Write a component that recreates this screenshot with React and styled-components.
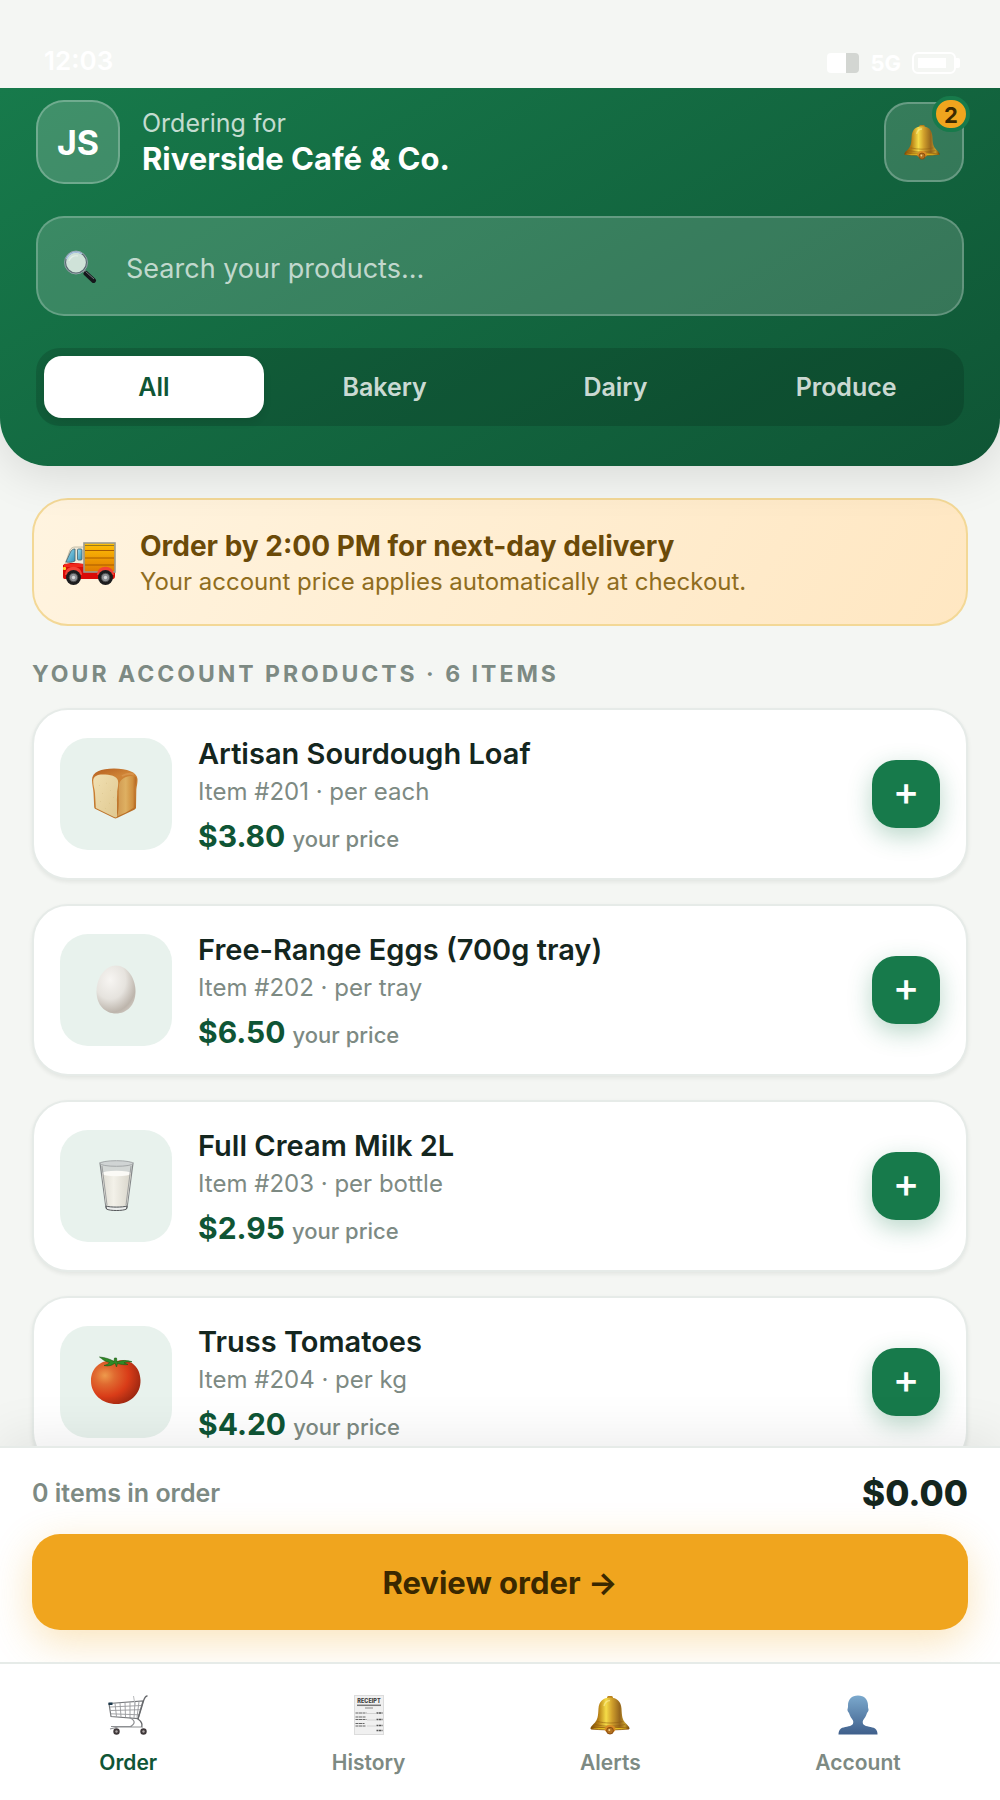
import React, { useState } from 'react'
import styled, { createGlobalStyle } from 'styled-components';

const GlobalStyle = createGlobalStyle`
  * {
    box-sizing: border-box;
  }
  body {
    margin: 0;
    background: #f4f6f3;
    color: #14261e;
    font-family: Inter, "Liberation Sans", sans-serif;
  }
  button, input {
    font-family: inherit;
  }
  h1, h2, h3, p {
    margin: 0;
  }
`;

const products = [
  { id: 201, name: 'Artisan Sourdough Loaf', unit: 'each', price: 3.8, Icon: BreadIcon },
  { id: 202, name: 'Free-Range Eggs (700g tray)', unit: 'tray', price: 6.5, Icon: EggIcon },
  { id: 203, name: 'Full Cream Milk 2L', unit: 'bottle', price: 2.95, Icon: MilkIcon },
  { id: 204, name: 'Truss Tomatoes', unit: 'kg', price: 4.2, Icon: TomatoIcon },
];

const categories = ['All', 'Bakery', 'Dairy', 'Produce'];

const navItems = [
  { label: 'Order', Icon: CartIcon },
  { label: 'History', Icon: ReceiptIcon },
  { label: 'Alerts', Icon: BellIcon },
  { label: 'Account', Icon: PersonIcon },
];

function BellIcon({ size = 40 }) {
  return (
    <svg width={size} height={size} viewBox="0 0 40 40" aria-hidden="true">
      <defs>
        <linearGradient id="bellBody" x1="0" x2="1" y1="0" y2="0">
          <stop offset="0" stopColor="#7a4c06" />
          <stop offset="0.2" stopColor="#b57d14" />
          <stop offset="0.4" stopColor="#f5dc48" />
          <stop offset="0.55" stopColor="#d1a02c" />
          <stop offset="0.75" stopColor="#95661d" />
          <stop offset="0.88" stopColor="#c39a2a" />
          <stop offset="1" stopColor="#6d430b" />
        </linearGradient>
      </defs>
      <rect x="17" y="1" width="6" height="4" rx="1.5" fill="#b98019" />
      <path d="M20 2.500c-7 0-11 4-11.500 11-.4 8-1 11-3.500 14-2 2.300-4 3.600-4.500 5.500-.2 1 .8 1.500 2 1.500h35c1.200 0 2.200-.5 2-1.500-.5-1.900-2.500-3.200-4.500-5.500-2.500-3-3.100-6-3.500-14C31 6.500 27 2.500 20 2.500z" fill="url(#bellBody)" />
      <path d="M7.500 26.500c8 2 17 2 25 0M5 29.500c9 2.200 21 2.200 30 0" fill="none" stroke="#8d5c11" strokeWidth="0.800" opacity="0.7" />
      <path d="M1 33.500c7-1.600 31-1.600 38 0-6 1.900-32 1.900-38 0z" fill="#e3bc20" stroke="#8a500b" strokeWidth="0.700" />
      <path d="M14.500 34.500a5.500 4.500 0 0 1 11 0c-1 4.500-10 4.500-11 0z" fill="#d98c25" />
      <circle cx="20" cy="35.700" r="3.400" fill="#b4701d" stroke="#7d430b" strokeWidth="0.800" />
      <circle cx="19.300" cy="35" r="1" fill="#f3d489" />
      <path d="M14 11c1-4 3-5.500 6-5.500" stroke="#fff09b" strokeWidth="1.500" fill="none" opacity="0.6" />
    </svg>
  );
}

function SearchIcon() {
  return (
    <svg width="34" height="34" viewBox="0 0 34 34" aria-hidden="true">
      <path d="M19 21l3 3" stroke="#9aa0a4" strokeWidth="3" />
      <path d="M22 24.500l7.500 7" stroke="#15171b" strokeWidth="5" strokeLinecap="round" />
      <path d="M21.500 22.500l8.500 7.500" stroke="#70757c" strokeWidth="1" />
      <circle cx="12" cy="13.500" r="10.800" fill="#cfe2d8" stroke="#596a70" strokeWidth="1.800" />
      <circle cx="12" cy="13.500" r="11.500" fill="none" stroke="#b9c6cc" strokeWidth="0.600" />
      <path d="M2.500 10a10 10 0 0 1 15.500-5" stroke="#a9c4e0" strokeWidth="1.500" fill="none" />
      <path d="M5 12c1-4 5-6 9-5" stroke="#e3efe9" strokeWidth="1.200" fill="none" />
    </svg>
  );
}

function TruckIcon() {
  return (
    <svg width="54" height="44" viewBox="0 0 54 44" aria-hidden="true">
      <defs>
        <linearGradient id="truckBox" x1="0" x2="0" y1="0" y2="1">
          <stop offset="0" stopColor="#ffc107" />
          <stop offset="1" stopColor="#e07b00" />
        </linearGradient>
        <linearGradient id="truckGlass" x1="0" x2="1" y1="0" y2="1">
          <stop offset="0" stopColor="#9adcf0" />
          <stop offset="1" stopColor="#3691b5" />
        </linearGradient>
      </defs>
      <path d="M3 22L8 8c1-2 3-3 5-3h9v19H3z" fill="#f0ead8" stroke="#b9b29c" strokeWidth="0.800" />
      <path d="M4 20l4.500-10c1-2 2.500-3 4.500-3v12c-3 1.500-6 1.500-9 1z" fill="url(#truckGlass)" stroke="#43606c" strokeWidth="0.800" />
      <rect x="15.500" y="7" width="4.500" height="11" rx="1" fill="url(#truckGlass)" stroke="#43606c" strokeWidth="0.800" />
      <path d="M1 23c6-3 14-2 21-1v4h31v8c0 2-1 3-2 3H3c-2 0-2-1-2-3z" fill="#d90b07" />
      <path d="M2 22h20v3H2z" fill="#f0281a" />
      <rect x="22" y="1" width="31" height="29" fill="url(#truckBox)" stroke="#999a91" strokeWidth="1.600" />
      <path d="M23 8.500h29M23 16h29M23 23h29" stroke="#a85a00" strokeWidth="1.200" />
      <path d="M23 3.500h29" stroke="#7f6a21" strokeWidth="0.800" />
      <path d="M3 33c0-11 17-11 17 0zM35 33c0-11 17-11 17 0z" fill="#f34235" />
      <rect x="1" y="25" width="3" height="3" rx="1" fill="#ffd633" />
      <circle cx="11.500" cy="35.500" r="7.500" fill="#1c1c1e" />
      <circle cx="43.500" cy="35.500" r="7.500" fill="#1c1c1e" />
      <circle cx="11.500" cy="35.500" r="4.200" fill="#8d8f93" stroke="#4a4b4d" />
      <circle cx="43.500" cy="35.500" r="4.200" fill="#8d8f93" stroke="#4a4b4d" />
      <circle cx="11.500" cy="35.500" r="1.700" fill="#d6d7d9" />
      <circle cx="43.500" cy="35.500" r="1.700" fill="#d6d7d9" />
    </svg>
  );
}

function BreadIcon() {
  return (
    <svg width="50" height="54" viewBox="0 0 50 54" aria-hidden="true">
      <defs>
        <linearGradient id="crust" x1="0" x2="0.300" y1="0" y2="1">
          <stop offset="0" stopColor="#b35c1e" />
          <stop offset="0.300" stopColor="#cf8436" />
          <stop offset="1" stopColor="#b97028" />
        </linearGradient>
        <linearGradient id="side" x1="0" x2="1" y1="0" y2="0">
          <stop offset="0" stopColor="#cf9850" />
          <stop offset="0.450" stopColor="#deb062" />
          <stop offset="0.800" stopColor="#d0903f" />
          <stop offset="1" stopColor="#b46522" />
        </linearGradient>
        <linearGradient id="crumb" x1="0" x2="1" y1="0" y2="1">
          <stop offset="0" stopColor="#f1e0b2" />
          <stop offset="1" stopColor="#dfc890" />
        </linearGradient>
      </defs>
      <path d="M1 13C1 5 10 1.500 23 1.500S46 5 46.500 12c.2 5-1 7-1.200 12L45 40.500c0 1-.7 1.800-1.700 2.300L26 51c-1.200.5-2 .5-3 0L4.500 42c-.8-.4-1.200-1-1.300-2L2.500 26C2.200 21 1 18 1 13z" fill="url(#crust)" />
      <path d="M28 18c1-7 10-11 17-8 1.300 4-1 8-1.200 14L43 40.500c-5 3.500-11 6.500-17 9 3-9 1-22 2-31.500z" fill="url(#side)" />
      <path d="M2.200 14c0-6 6-7 12-6.500 8 .6 13 2.500 13 8 0 5-1 7-1 10s-.5 7-.2 10V50c-1 .5-2 .5-3 0L4.800 41 4 26c-.2-4-1.800-7-1.800-12z" fill="url(#crumb)" />
      <path d="M31 9c4-2.500 8-3 12-1.500" stroke="#e7a966" strokeWidth="2" fill="none" opacity="0.4" />
      <path d="M8 18l.5.5M15 16l.5.300M11 26l.5.500M19 23l.5.500M9 34l.5.500M18 36l.5.300M14 41l.5.500M22 30l.500.500" stroke="#d6bf86" strokeWidth="1" />
    </svg>
  );
}

function EggIcon() {
  return (
    <svg width="50" height="54" viewBox="0 0 50 54" aria-hidden="true">
      <defs>
        <radialGradient id="shell" cx="0.350" cy="0.300" r="0.800">
          <stop offset="0" stopColor="#f7f5f2" />
          <stop offset="0.500" stopColor="#e6e3de" />
          <stop offset="0.850" stopColor="#bdb5ac" />
          <stop offset="1" stopColor="#cfc8c0" />
        </radialGradient>
      </defs>
      <path d="M25 2.500C14 2.500 5.500 15 5.500 28.500 5.500 42 14 50.500 25 50.500S44.500 42 44.500 28.500C44.500 15 36 2.500 25 2.500z" fill="url(#shell)" />
    </svg>
  );
}

function MilkIcon() {
  return (
    <svg width="50" height="54" viewBox="0 0 50 54" aria-hidden="true">
      <defs>
        <linearGradient id="milk" x1="0" x2="1" y1="0" y2="0">
          <stop offset="0" stopColor="#dedcd3" />
          <stop offset="0.400" stopColor="#f3f1e9" />
          <stop offset="1" stopColor="#d8d5ca" />
        </linearGradient>
      </defs>
      <path d="M9 4l6 45c.3 2.500 20.700 2.500 21 0l6-45z" fill="#d3d7d5" stroke="#85888a" strokeWidth="1.200" />
      <path d="M11 15c4-3 25-3 29 0l-4 31c-4 2-17 2-21 0z" fill="url(#milk)" />
      <ellipse cx="25.500" cy="14.500" rx="14.500" ry="2.700" fill="#fbfaf6" />
      <ellipse cx="25.500" cy="4.500" rx="16.500" ry="2.800" fill="#d0d4d4" stroke="#a4a8a9" strokeWidth="1" />
      <path d="M15 47c4 1.500 17 1.500 21 0l-.5 3c-3 2-17 2-20 0z" fill="#eceeed" stroke="#55585a" strokeWidth="1" />
      <path d="M11 7l5 39M40 7l-5 39" stroke="#8e9192" strokeWidth="0.800" />
    </svg>
  );
}

function TomatoIcon() {
  return (
    <svg width="50" height="54" viewBox="0 0 50 54" aria-hidden="true">
      <defs>
        <radialGradient id="tomato" cx="0.280" cy="0.350" r="0.800">
          <stop offset="0" stopColor="#ee9a4c" />
          <stop offset="0.250" stopColor="#e06a30" />
          <stop offset="0.600" stopColor="#d93c18" />
          <stop offset="1" stopColor="#942410" />
        </radialGradient>
      </defs>
      <path d="M25 6.500C33 2.500 49 7 49.500 25 50 39 39 49 25.500 49 11 49 0 39 0 26 0 10 15 3 25 6.500z" fill="url(#tomato)" />
      <path d="M24 8C21 10.500 18 11.500 13 10.500c3-.8 4.500-1.500 5.500-3C14 6.500 11 4 8.500 2 14 2.500 19 4 23 6.500L23.500 3h2l.5 4c5-2 10.500-2 15-.2-3.500-.3-6 .2-8 1l4 1.700c-4 .5-7 0-10.500-1L25.500 12z" fill="#2f8a26" stroke="#1b5a14" strokeWidth="0.600" />
    </svg>
  );
}

function CartIcon() {
  return (
    <svg width="40" height="40" viewBox="0 0 40 40" fill="none" aria-hidden="true">
      <path d="M1 8.500L35 6l-5 17.500L3 21.500z" stroke="#77797c" strokeWidth="1.200" />
      <path d="M2 12l31.500-1.500M2.300 15.500l30.500-.8M2.700 18.800l28.800 1M7 8.200l1.500 13.500M12 7.900l1 14M17 7.500l.5 14.800M22 7.200v15.500M27 6.800l-1 16M31 6.500l-2 16" stroke="#97999c" strokeWidth="0.900" />
      <path d="M39.500 1c-2.500-.2-3 2-4 5L30 24c4 3 5 5 3.500 8" stroke="#66686b" strokeWidth="1.300" />
      <path d="M21.500 22.500c6 3 6 6 1 9H3M2 34l8-2h25" stroke="#8d8f92" strokeWidth="1.200" />
      <path d="M25.500 1L27 10" stroke="#b8babc" strokeWidth="1" />
      <rect x="0.500" y="7.500" width="4" height="2.500" fill="#18364a" />
      <circle cx="8.500" cy="36.500" r="3.200" fill="#3e3739" />
      <circle cx="35.500" cy="36.500" r="3.200" fill="#3e3739" />
      <circle cx="8.500" cy="36.500" r="1.200" fill="#aaa3a3" />
      <circle cx="35.500" cy="36.500" r="1.200" fill="#aaa3a3" />
    </svg>
  );
}

function ReceiptIcon() {
  return (
    <svg width="40" height="40" viewBox="0 0 40 40" aria-hidden="true">
      <rect x="5.500" y="0.500" width="29" height="39" fill="#f0f0f0" stroke="#dcdcdc" />
      <text x="20" y="8.300" fontSize="5.500" fontWeight="800" textAnchor="middle" fill="#3b3b3b">RECEIPT</text>
      <path d="M8 10.300h24" stroke="#777" strokeWidth="1.500" />
      <path d="M16 13h8" stroke="#8a8a8a" strokeWidth="1" />
      <path d="M6.500 18h11M6.500 22h10M6.500 24.500h11M6.500 28.500h9M6.500 31h10" stroke="#666" strokeWidth="1.200" strokeDasharray="3 0.500" />
      <path d="M27.500 18h6M27.500 24.500h6M27.500 30.500h6M27.500 35.500h6" stroke="#555" strokeWidth="1.400" strokeDasharray="2 0.500" />
      <path d="M18 18.500h9M18 25h9M18 31h9" stroke="#d2d2d2" strokeWidth="1" />
    </svg>
  );
}

function PersonIcon() {
  return (
    <svg width="40" height="40" viewBox="0 0 40 40" aria-hidden="true">
      <defs>
        <linearGradient id="person" x1="0" x2="0" y1="0" y2="1">
          <stop offset="0" stopColor="#7ba9cd" />
          <stop offset="1" stopColor="#3f5f8b" />
        </linearGradient>
      </defs>
      <path d="M20 .5c-6.500 0-10 4-10 10 0 1.500 0 2-.3 3-.8 1.500.3 3.500 1.300 4.500 1 3.500 2.500 5 4 7.500.5 1.500.3 3-.5 4C12 32 6 31.500 3 33.500 1 35 .5 37 .5 39.500h39c0-2.500-.5-4.500-2.500-6-3-2-9-1.500-11.500-4-.8-1-1-2.500-.5-4 1.500-2.500 3-4 4-7.500 1-1 2.100-3 1.300-4.500-.3-1-.3-1.500-.3-3 0-6-3.500-10-10-10z" fill="url(#person)" />
    </svg>
  );
}

const App = () => {
  const [category, setCategory] = useState('All');
  const [tab, setTab] = useState('Order');
  const [order, setOrder] = useState([]);

  const total = order.reduce((sum, item) => sum + item.price, 0);

  return (
    <Screen>
      <GlobalStyle />
      <StatusBar>
        <span>12:03</span>
        <StatusIcons>
          <Signal />
          <Network>5G</Network>
          <Battery />
        </StatusIcons>
      </StatusBar>

      <Header>
        <AccountRow>
          <Avatar>JS</Avatar>
          <AccountText>
            <p>Ordering for</p>
            <h1>Riverside Café &amp; Co.</h1>
          </AccountText>
          <BellButton aria-label="Notifications">
            <BellIcon size={36} />
            <Badge>2</Badge>
          </BellButton>
        </AccountRow>
        <SearchBox>
          <SearchIcon />
          <input type="search" aria-label="Search your products" placeholder="Search your products..." />
        </SearchBox>
        <Tabs>
          {categories.map((name) => (
            <Tab key={name} $active={name === category} onClick={() => setCategory(name)}>
              {name}
            </Tab>
          ))}
        </Tabs>
      </Header>

      <Content>
        <Banner>
          <TruckIcon />
          <div>
            <BannerTitle>Order by 2:00 PM for next-day delivery</BannerTitle>
            <BannerText>Your account price applies automatically at checkout.</BannerText>
          </div>
        </Banner>
        <SectionTitle>Your account products · 6 items</SectionTitle>
        <ProductList>
          {products.map((product) => (
            <Card key={product.id}>
              <Thumb><product.Icon /></Thumb>
              <Info>
                <ProductName>{product.name}</ProductName>
                <Meta>Item #{product.id} · per {product.unit}</Meta>
                <Price>${product.price.toFixed(2)} <small>your price</small></Price>
              </Info>
              <AddButton
                aria-label={`Add ${product.name}`}
                onClick={() => setOrder([...order, product])}
              >
                +
              </AddButton>
            </Card>
          ))}
        </ProductList>
      </Content>

      <OrderBar>
        <Summary>
          <span>{order.length} items in order</span>
          <strong>${total.toFixed(2)}</strong>
        </Summary>
        <ReviewButton>Review order →</ReviewButton>
      </OrderBar>

      <BottomNav>
        {navItems.map(({ label, Icon }) => (
          <NavButton key={label} $active={label === tab} onClick={() => setTab(label)}>
            <Icon />
            {label}
          </NavButton>
        ))}
      </BottomNav>
    </Screen>
  )
}

const Screen = styled.div`
  display: flex;
  flex-direction: column;
  height: 100vh;
  overflow: hidden;
`;

const StatusBar = styled.div`
  position: relative;
  z-index: 2;
  display: flex;
  justify-content: space-between;
  align-items: center;
  flex: none;
  padding: 45px 40px 11px 44px;
  background: #f4f6f3;
  color: #fff;
  font-size: 26px;
  font-weight: 600;
  line-height: 32px;
`;

const StatusIcons = styled.div`
  display: flex;
  align-items: center;
  gap: 11px;
  height: 32px;
  padding-top: 4px;
`;

const Signal = styled.span`
  width: 32px;
  height: 20px;
  border-radius: 4px;
  background: linear-gradient(90deg, #fff 60%, #d3d6d2 60%);
`;

const Network = styled.span`
  font-size: 22px;
  font-weight: 700;
`;

const Battery = styled.span`
  position: relative;
  width: 44px;
  height: 22px;
  margin-right: 4px;
  padding: 4px 8px 4px 4px;
  border: 2px solid #fff;
  border-radius: 6px;
  background: #fff content-box;

  &::after {
    content: '';
    position: absolute;
    top: 4px;
    right: -6px;
    width: 4px;
    height: 10px;
    border-radius: 0 2px 2px 0;
    background: #fff;
  }
`;

const Header = styled.header`
  position: relative;
  z-index: 1;
  display: flex;
  flex-direction: column;
  gap: 32px;
  flex: none;
  padding: 12px 36px 40px;
  border-radius: 0 0 48px 48px;
  background: linear-gradient(150deg, #177a4b, #0f5535);
  box-shadow: 0 8px 48px rgba(0, 0, 0, 0.12);
`;

const AccountRow = styled.div`
  display: flex;
  align-items: center;
`;

const Avatar = styled.div`
  display: flex;
  align-items: center;
  justify-content: center;
  width: 84px;
  height: 84px;
  border: 2px solid rgba(255, 255, 255, 0.25);
  border-radius: 28px;
  background: rgba(255, 255, 255, 0.18);
  color: #fff;
  font-size: 34px;
  font-weight: 700;
`;

const AccountText = styled.div`
  flex: 1;
  padding-left: 22px;
  color: #fff;

  p {
    padding-top: 2px;
    color: rgba(255, 255, 255, 0.75);
    font-size: 25px;
    line-height: 32px;
  }
  h1 {
    font-size: 31px;
    font-weight: 700;
    line-height: 40px;
  }
`;

const BellButton = styled.button`
  position: relative;
  display: flex;
  align-items: center;
  justify-content: center;
  width: 80px;
  height: 80px;
  padding: 0 4px 0 0;
  border: 2px solid rgba(255, 255, 255, 0.25);
  border-radius: 24px;
  background: rgba(255, 255, 255, 0.15);
`;

const Badge = styled.span`
  position: absolute;
  top: -8px;
  right: -8px;
  min-width: 38px;
  height: 36px;
  border: 4px solid #177a4b;
  border-radius: 18px;
  background: #f0a51e;
  color: #3a2800;
  font-size: 22px;
  font-weight: 700;
  line-height: 30px;
  text-align: center;
`;

const SearchBox = styled.label`
  display: flex;
  align-items: center;
  gap: 28px;
  height: 100px;
  padding: 0 26px;
  border: 2px solid rgba(255, 255, 255, 0.22);
  border-radius: 28px;
  background: rgba(255, 255, 255, 0.16);

  input {
    flex: 1;
    min-width: 0;
    padding: 4px 0 0;
    border: 0;
    outline: 0;
    background: none;
    color: #fff;
    font-size: 27px;
  }
  input::placeholder {
    color: rgba(255, 255, 255, 0.7);
    opacity: 1;
  }
`;

const Tabs = styled.div`
  display: flex;
  gap: 11px;
  padding: 8px;
  border-radius: 24px;
  background: rgba(0, 0, 0, 0.14);
`;

const Tab = styled.button`
  flex: 1 1 0;
  height: 62px;
  padding: 0;
  border: 0;
  border-radius: 18px;
  background: ${(props) => (props.$active ? '#fff' : 'transparent')};
  box-shadow: ${(props) => (props.$active ? '0 4px 8px rgba(0, 0, 0, 0.08)' : 'none')};
  color: ${(props) => (props.$active ? '#0f5535' : 'rgba(255, 255, 255, 0.8)')};
  font-size: 25px;
  font-weight: 600;
`;

const Content = styled.main`
  flex: 1;
  min-height: 0;
  padding: 32px 32px 0;
  overflow-y: auto;
  scrollbar-width: none;
`;

const Banner = styled.section`
  display: flex;
  align-items: center;
  gap: 24px;
  padding: 28px 28px 24px;
  border: 2px solid #f3d896;
  border-radius: 36px;
  background: linear-gradient(120deg, #fff4e0, #ffe7c2);

  svg {
    flex: none;
  }
`;

const BannerTitle = styled.h2`
  color: #6b4a08;
  font-size: 28px;
  font-weight: 700;
  line-height: 36px;
`;

const BannerText = styled.p`
  color: #8f6d1e;
  font-size: 24px;
  line-height: 36px;
`;

const SectionTitle = styled.h2`
  padding: 32px 0 18px;
  color: #7d8a83;
  font-size: 23px;
  font-weight: 700;
  letter-spacing: 3px;
  line-height: 32px;
  text-transform: uppercase;
`;

const ProductList = styled.div`
  display: flex;
  flex-direction: column;
  gap: 24px;
`;

const Card = styled.article`
  display: flex;
  align-items: center;
  gap: 26px;
  padding: 24px 26px;
  border: 2px solid #e6ebe8;
  border-radius: 36px;
  background: #fff;
  box-shadow: 0 2px 4px rgba(20, 38, 30, 0.08);
`;

const Thumb = styled.div`
  display: flex;
  align-items: center;
  justify-content: center;
  flex: none;
  width: 112px;
  height: 112px;
  border-radius: 28px;
  background: #e8f2ed;
`;

const Info = styled.div`
  flex: 1;
  min-width: 0;
  padding-top: 2px;
`;

const ProductName = styled.h3`
  font-size: 29px;
  font-weight: 600;
  line-height: 36px;
`;

const Meta = styled.p`
  color: #7d8a83;
  font-size: 24px;
  line-height: 40px;
`;

const Price = styled.p`
  margin-top: 6px;
  color: #0f5535;
  font-size: 30px;
  font-weight: 700;
  line-height: 36px;

  small {
    color: #7d8a83;
    font-size: 22px;
    font-weight: 500;
    line-height: 22px;
  }
`;

const AddButton = styled.button`
  flex: none;
  width: 68px;
  height: 68px;
  padding: 0 0 6px;
  border: 0;
  border-radius: 24px;
  background: #177a4b;
  box-shadow: 0 8px 24px rgba(23, 122, 75, 0.3);
  color: #fff;
  font-size: 40px;
  font-weight: 500;
  line-height: 62px;
`;

const OrderBar = styled.section`
  position: relative;
  z-index: 1;
  flex: none;
  padding: 18px 32px 32px;
  border-top: 2px solid #e6ebe8;
  background: #fff;
  box-shadow: 0 -8px 48px rgba(0, 0, 0, 0.08);
`;

const Summary = styled.div`
  display: flex;
  align-items: center;
  justify-content: space-between;
  margin-bottom: 14px;
  line-height: 54px;

  span {
    color: #7d8a83;
    font-size: 25px;
    font-weight: 600;
  }
  strong {
    font-size: 35px;
    font-weight: 800;
  }
`;

const ReviewButton = styled.button`
  width: 100%;
  height: 96px;
  border: 0;
  border-radius: 28px;
  background: #f0a51e;
  box-shadow: 0 12px 40px rgba(240, 165, 30, 0.3);
  color: #3a2800;
  font-size: 31px;
  font-weight: 700;
`;

const BottomNav = styled.nav`
  position: relative;
  z-index: 2;
  display: flex;
  justify-content: space-around;
  flex: none;
  padding: 31px 12px 21px;
  border-top: 2px solid #e6ebe8;
  background: #fff;
`;

const NavButton = styled.button`
  display: flex;
  flex-direction: column;
  align-items: center;
  gap: 12px;
  padding: 0;
  border: 0;
  background: none;
  color: ${(props) => (props.$active ? '#0f5535' : '#7d8a83')};
  font-size: 21px;
  font-weight: 600;
  line-height: 32px;
`;

export default App;
